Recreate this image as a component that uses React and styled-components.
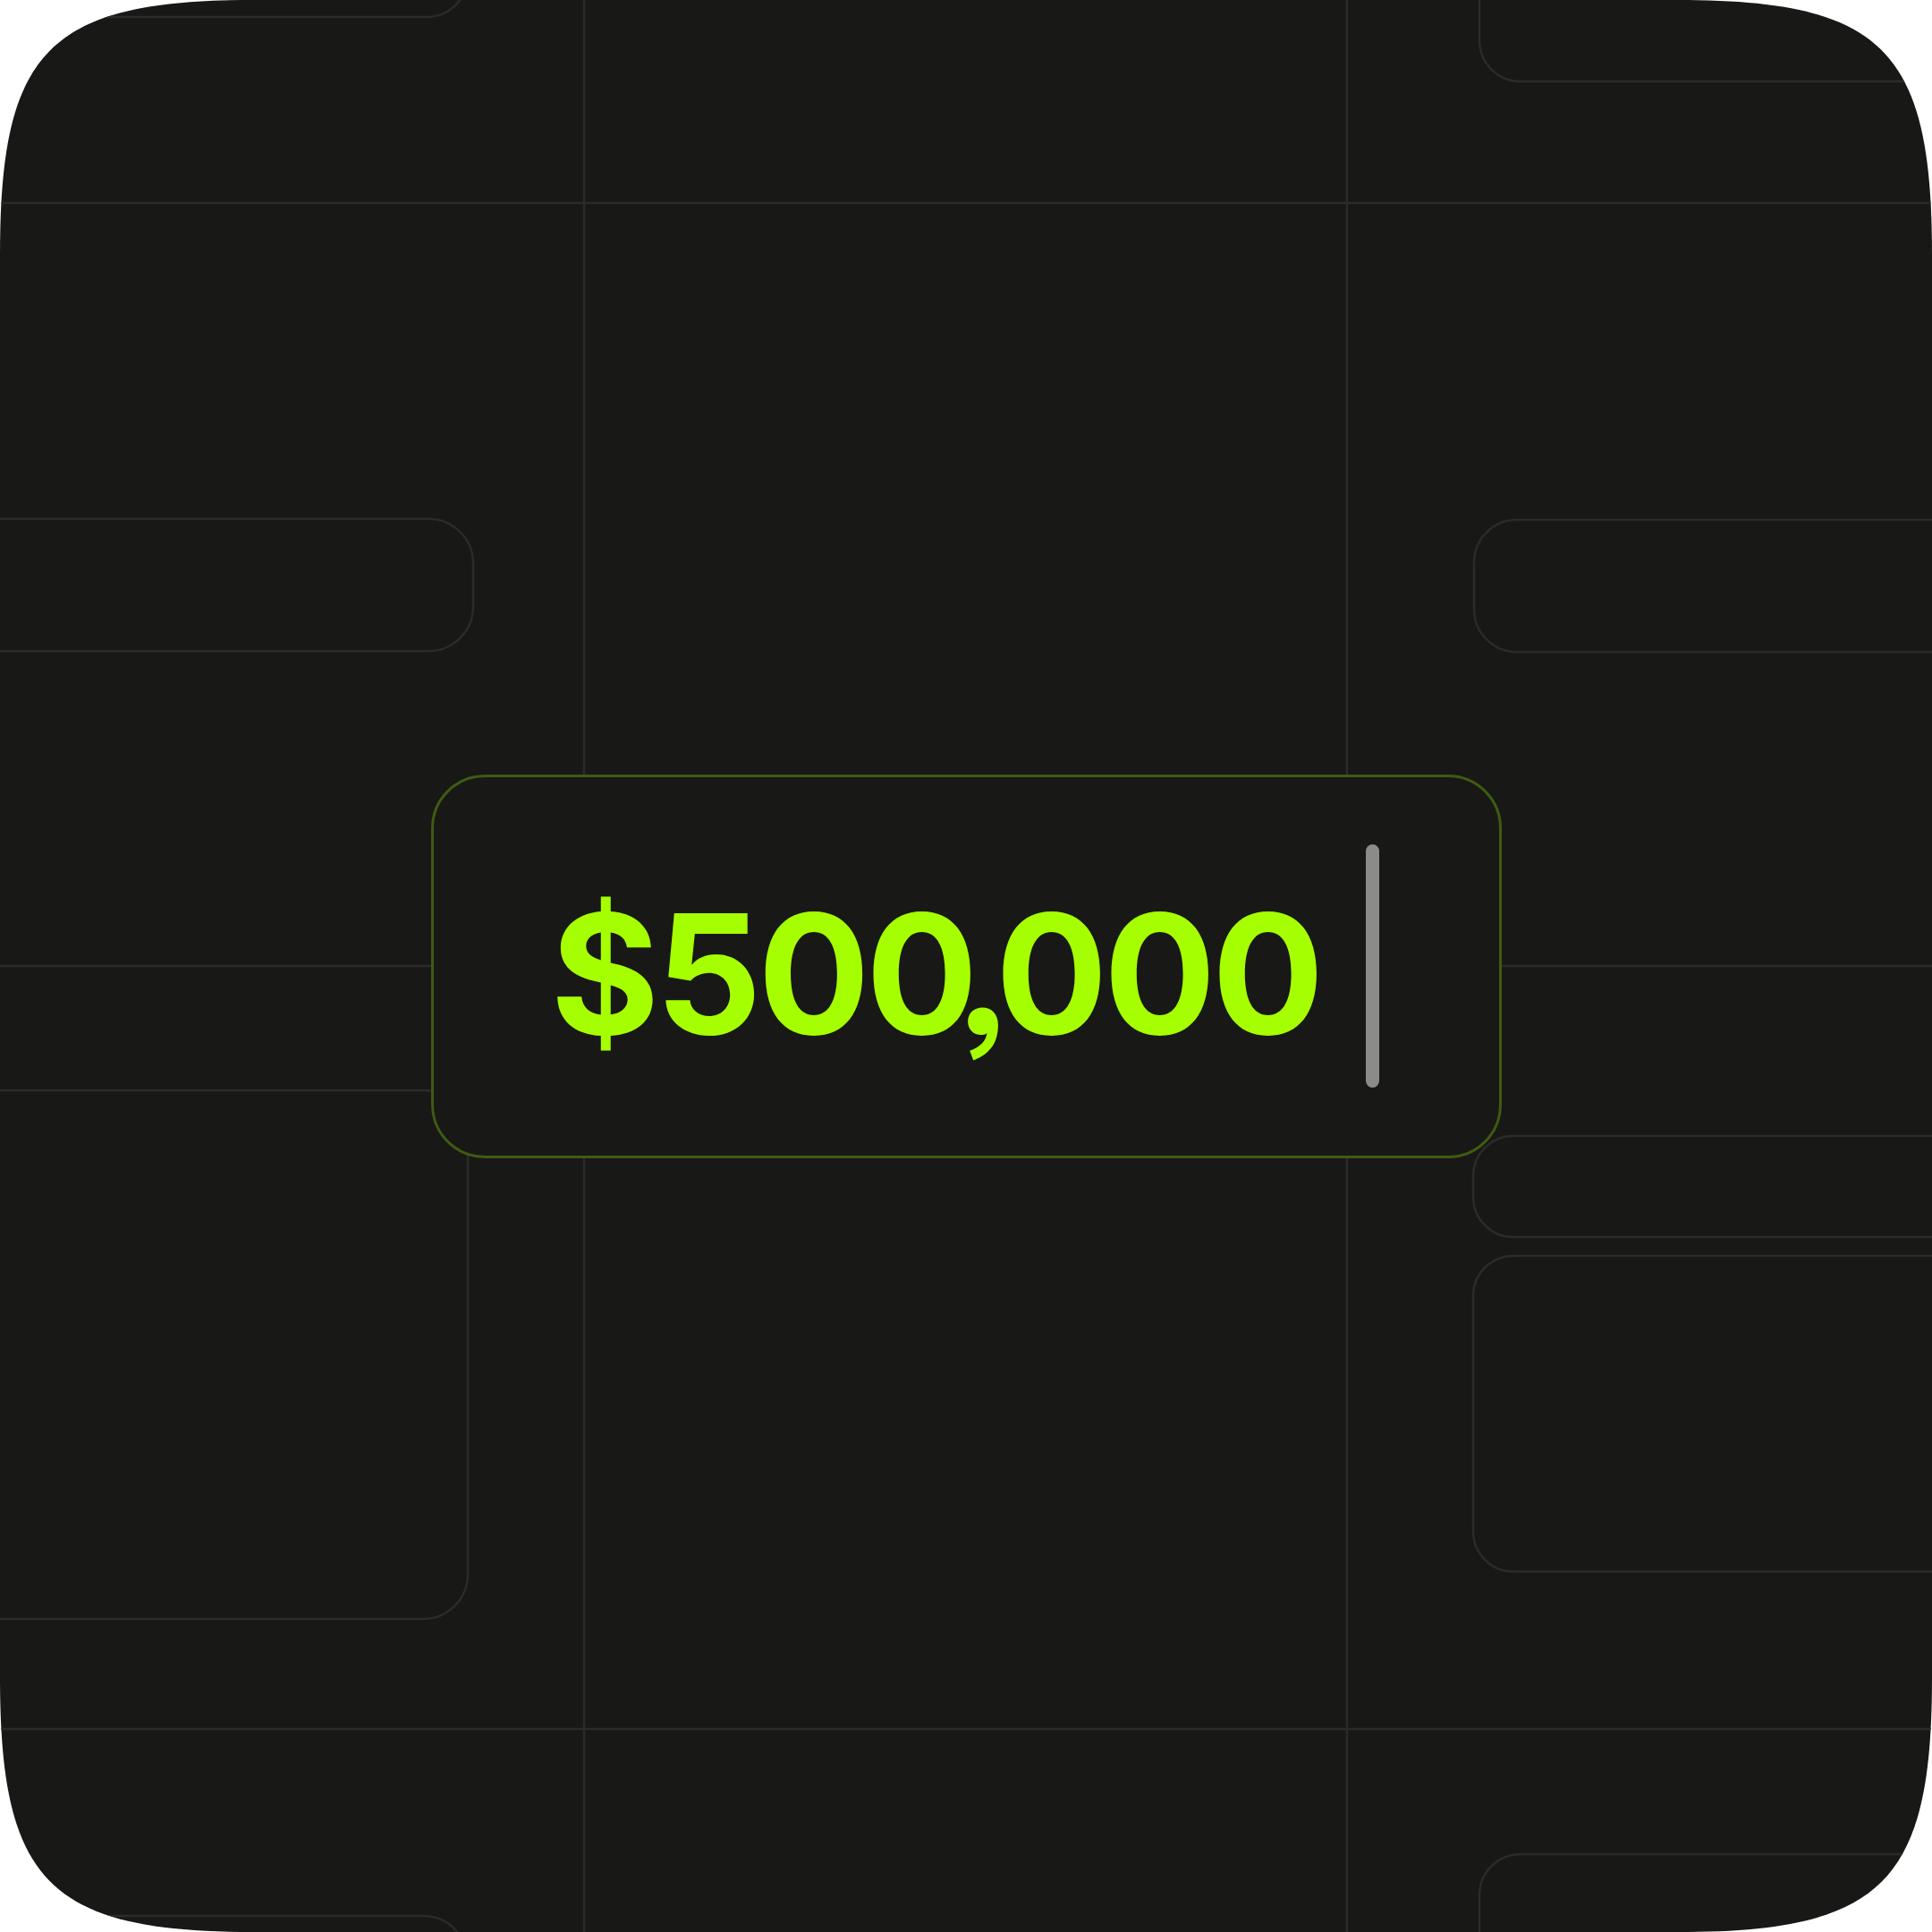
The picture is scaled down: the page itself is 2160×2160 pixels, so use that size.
import React from 'react'
import styled, { createGlobalStyle } from 'styled-components'

const GlobalStyle = createGlobalStyle`
    html, body {
        margin:0;
        padding:0;
        background:#ffffff;
    }
    body {
        font-family:Inter, "Liberation Sans", sans-serif;
    }
`

const LINE = '#2b2b29'

const lines = [
    { x1: 653, y1: 0, x2: 653, y2: 2160 },
    { x1: 1506, y1: 0, x2: 1506, y2: 2160 },
    { x1: 0, y1: 227, x2: 2160, y2: 227 },
    { x1: 0, y1: 1080, x2: 2160, y2: 1080 },
    { x1: 0, y1: 1933, x2: 2160, y2: 1933 },
]

// outlined slabs that bleed off the edges of the frame
const slabs = [
    { x: -120, y: -220, w: 643, h: 239, r: 46 },
    { x: -120, y: 580, w: 649, h: 148, r: 50 },
    { x: -120, y: 1219, w: 643, h: 591, r: 50 },
    { x: -120, y: 2142, w: 643, h: 220, r: 50 },
    { x: 1654, y: -220, w: 620, h: 311, r: 46 },
    { x: 1648, y: 581, w: 620, h: 148, r: 48 },
    { x: 1647, y: 1270, w: 620, h: 113, r: 45 },
    { x: 1647, y: 1404, w: 620, h: 353, r: 45 },
    { x: 1654, y: 2073, w: 620, h: 220, r: 46 },
]

const App = () => {
    return (
        <>
            <GlobalStyle />
            <Frame>
                <Backdrop viewBox="0 0 2160 2160" preserveAspectRatio="none">
                    {lines.map((l, i) => (
                        <line key={i} {...l} stroke={LINE} strokeWidth="2.5" />
                    ))}
                    {slabs.map((s, i) => (
                        <rect key={i} x={s.x} y={s.y} width={s.w} height={s.h} rx={s.r}
                            fill="none" stroke={LINE} strokeWidth="2.5" />
                    ))}
                </Backdrop>
                <Card>
                    <Amount>$500<Comma>,</Comma>000</Amount>
                    <Caret />
                </Card>
            </Frame>
        </>
    )
}
export default App

const Frame = styled.div`
    width:2160px;
    height:2160px;
    display:grid;
    background:#181816;
    clip-path:path('M 0 285 C 0 55 55 0 285 0 L 1875 0 C 2105 0 2160 55 2160 285 L 2160 1875 C 2160 2105 2105 2160 1875 2160 L 285 2160 C 55 2160 0 2105 0 1875 Z');
`
const Backdrop = styled.svg`
    grid-area:1 / 1;
    width:2160px;
    height:2160px;
    display:block;
`
const Card = styled.div`
    grid-area:1 / 1;
    place-self:center;
    box-sizing:border-box;
    width:1197px;
    height:429px;
    padding:0 134px 0 131px;
    display:flex;
    align-items:center;
    background:#181816;
    border:3px solid #3f5b12;
    border-radius:60px;
`
const Amount = styled.span`
    font-family:Inter, "Liberation Sans", sans-serif;
    font-weight:700;
    font-size:186px;
    line-height:1;
    letter-spacing:-4.5px;
    color:#a6ff00;
    margin-top:18px;
    white-space:nowrap;
    font-feature-settings:"ss03" 1;
`
const Comma = styled.span`
    display:inline-flex;
    justify-content:center;
    width:24px;
    letter-spacing:0;
`
const Caret = styled.div`
    flex-shrink:0;
    margin-left:auto;
    width:15px;
    height:272px;
    border-radius:8px;
    background:#8b8b8a;
`
